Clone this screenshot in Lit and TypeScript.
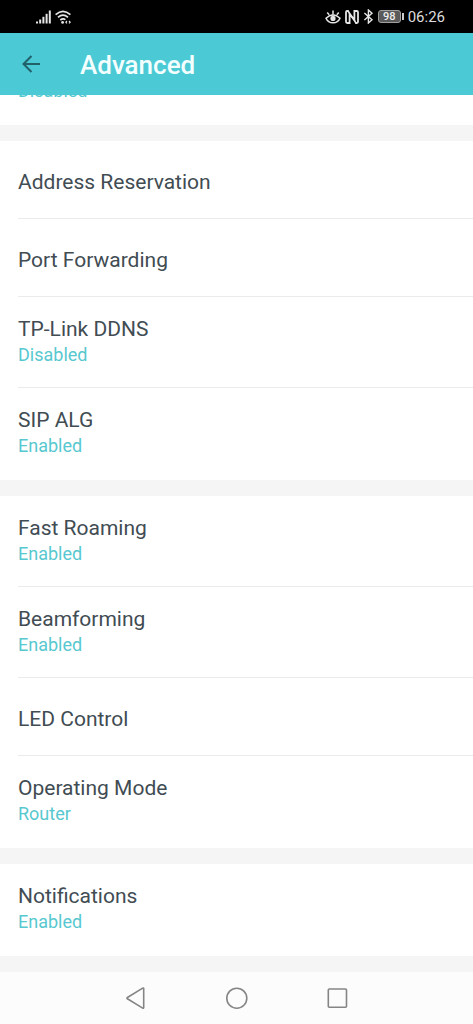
import { LitElement, html, css, nothing } from "lit";
import { customElement, property } from "lit/decorators.js";

interface Setting {
  title: string;
  status?: string;
}

const GROUPS: Setting[][] = [
  [
    { title: "Address Reservation" },
    { title: "Port Forwarding" },
    { title: "TP-Link DDNS", status: "Disabled" },
    { title: "SIP ALG", status: "Enabled" },
  ],
  [
    { title: "Fast Roaming", status: "Enabled" },
    { title: "Beamforming", status: "Enabled" },
    { title: "LED Control" },
    { title: "Operating Mode", status: "Router" },
  ],
  [{ title: "Notifications", status: "Enabled" }],
];

@customElement("status-bar")
export class StatusBar extends LitElement {
  static styles = css`
    :host {
      display: flex;
      align-items: center;
      justify-content: space-between;
      height: 33px;
      padding: 0 28px 0 36px;
      box-sizing: border-box;
      background: #000;
      color: #dcdcdc;
      font-size: 15px;
      line-height: 20px;
    }
    .group {
      display: flex;
      align-items: center;
      gap: 4px;
    }
    svg {
      display: block;
    }
    .battery {
      display: flex;
      align-items: center;
      gap: 1px;
    }
    .level {
      box-sizing: border-box;
      width: 23px;
      height: 13px;
      border: 1px solid #a0a0a0;
      border-radius: 3px;
      background: #5a5a5a;
      font-size: 11px;
      font-weight: 500;
      line-height: 11px;
      text-align: center;
      color: #eee;
    }
    .tip {
      width: 2px;
      height: 7px;
      background: #ccc;
    }
  `;

  render() {
    return html`
      <div class="group">
        <svg width="15" height="14" viewBox="0 0 15 14" fill="#e6e6e6" aria-hidden="true">
          <rect x="0" y="11.5" width="2" height="2" />
          <rect x="3.2" y="9.5" width="2" height="4" />
          <rect x="6.4" y="6.8" width="2" height="6.7" />
          <rect x="9.6" y="3.8" width="2" height="9.7" />
          <rect x="12.8" y="0.5" width="2" height="13" />
        </svg>
        <svg width="16" height="14" viewBox="0 0 16 14" fill="none" stroke="#e6e6e6" stroke-width="1.7" aria-hidden="true">
          <path d="M0.6 4.6Q8 -2 15.4 4.6M3 7.4Q8 3 13 7.4M5.3 10Q8 7.8 10.4 9.6" />
          <circle cx="7.6" cy="12.4" r="1.4" fill="#e6e6e6" stroke="none" />
          <path d="M12 11L10.8 12.2L12 13.4M14 11L15.2 12.2L14 13.4" stroke-width="1.1" />
        </svg>
      </div>
      <div class="group">
        <svg width="16" height="14" viewBox="0 0 16 14" fill="none" stroke="#e6e6e6" stroke-width="1.5" aria-hidden="true">
          <path d="M1 8.2Q8 1.6 15 8.2Q13 12.8 8 12.8Q3 12.8 1 8.2Z" />
          <path d="M2.2 2.6L4.2 4.8M8 0.6V4M13.8 2.6L11.8 4.8" />
          <circle cx="8" cy="8.4" r="2.6" fill="#e6e6e6" stroke="none" />
        </svg>
        <svg width="14" height="14" viewBox="0 0 14 14" fill="none" stroke="#e6e6e6" stroke-width="1.8" aria-hidden="true">
          <path d="M3.8 1H2.2Q1 1 1 2.2V11.8Q1 13 2.2 13H4.6V4.4L9.4 9.6V1H11.8Q13 1 13 2.2V11.8Q13 13 11.8 13H10.2" />
          <path d="M3 1L11 13" stroke-width="1.6" />
        </svg>
        <svg width="11" height="15" viewBox="0 0 11 15" fill="none" stroke="#e6e6e6" stroke-width="1.4" aria-hidden="true">
          <path d="M1.4 4L9 10.8L5.4 14V1L9 4.2L1.4 11" />
        </svg>
        <div class="battery"><span class="level">98</span><span class="tip"></span></div>
        <time>06:26</time>
      </div>
    `;
  }
}

@customElement("setting-row")
export class SettingRow extends LitElement {
  @property() title = "";
  @property() status = "";

  static styles = css`
    :host {
      display: block;
      padding-left: 18px;
    }
    .row {
      display: flex;
      flex-direction: column;
      width: 100%;
      margin: 0;
      padding: 28px 18px 23px 0;
      border: 0;
      border-bottom: 1px solid #ebebeb;
      background: none;
      font: inherit;
      text-align: left;
      color: #414c53;
    }
    .with-status {
      padding: 19px 18px 19px 0;
    }
    :host(:last-of-type) .row {
      border-bottom-color: transparent;
      padding-bottom: 20px;
    }
    .title {
      font-size: 21px;
      line-height: 26px;
    }
    .status {
      font-size: 18px;
      line-height: 26px;
      color: #57c8cf;
    }
  `;

  render() {
    return html`
      <button type="button" class="row ${this.status ? "with-status" : ""}">
        <span class="title">${this.title}</span>
        ${this.status ? html`<span class="status">${this.status}</span>` : nothing}
      </button>
    `;
  }
}

@customElement("app-root")
export class AppRoot extends LitElement {
  static styles = css`
    :host {
      display: flex;
      flex-direction: column;
      min-height: 100vh;
      background: #f5f5f5;
      font-family: Roboto, sans-serif;
    }
    .header {
      display: flex;
      align-items: center;
      gap: 38px;
      height: 62px;
      padding: 0 21px;
      background: #4bcad5;
    }
    .icon {
      display: block;
      margin: 0;
      padding: 0;
      border: 0;
      background: none;
    }
    .icon svg {
      display: block;
    }
    h1 {
      margin: 0;
      padding-top: 2px;
      font-size: 26px;
      font-weight: 500;
      line-height: 32px;
      color: #f4ffff;
    }
    main {
      display: flex;
      flex-direction: column;
      flex: 1;
      gap: 16px;
      padding-bottom: 16px;
    }
    section {
      background: #fff;
    }
    /* Row that is mostly scrolled away under the header */
    .scrolled {
      display: flex;
      flex-direction: column;
      justify-content: flex-end;
      height: 30px;
      overflow: hidden;
      padding-left: 18px;
      box-sizing: border-box;
      font-size: 18px;
      line-height: 26px;
      color: #57c8cf;
    }
    .scrolled span {
      padding-bottom: 21px;
    }
    nav {
      display: flex;
      align-items: center;
      justify-content: center;
      gap: 78px;
      height: 52px;
      background: #fcfcfc;
    }
  `;

  render() {
    return html`
      <status-bar></status-bar>
      <header class="header">
        <button type="button" class="icon" aria-label="Back">
          <svg width="21" height="20" viewBox="0 0 21 20" fill="none" stroke="#22606a" stroke-width="2">
            <path d="M19 10H3M10.5 2L2.5 10L10.5 18" />
          </svg>
        </button>
        <h1>Advanced</h1>
      </header>
      <main>
        <section class="scrolled"><span>Disabled</span></section>
        ${GROUPS.map(
          (group) => html`<section>
            ${group.map(
              (s) => html`<setting-row .title=${s.title} .status=${s.status ?? ""}></setting-row>`
            )}
          </section>`
        )}
      </main>
      <nav aria-label="System">
        <button type="button" class="icon" aria-label="Back">
          <svg width="22" height="24" viewBox="0 0 22 24" fill="none" stroke="#858585" stroke-width="1.6" stroke-linejoin="round">
            <path d="M18.7 2.6V21.6Q18.7 22.6 17.7 22.1L2.4 12.8Q1.6 12.1 2.4 11.5L17.7 2.1Q18.7 1.6 18.7 2.6Z" />
          </svg>
        </button>
        <button type="button" class="icon" aria-label="Home">
          <svg width="24" height="24" viewBox="0 0 24 24" fill="none" stroke="#858585" stroke-width="1.6">
            <circle cx="11.8" cy="12.2" r="10" />
          </svg>
        </button>
        <button type="button" class="icon" aria-label="Recent apps">
          <svg width="22" height="24" viewBox="0 0 22 24" fill="none" stroke="#858585" stroke-width="1.6">
            <rect x="1.3" y="3" width="18.2" height="18.2" rx="1" />
          </svg>
        </button>
      </nav>
    `;
  }
}
